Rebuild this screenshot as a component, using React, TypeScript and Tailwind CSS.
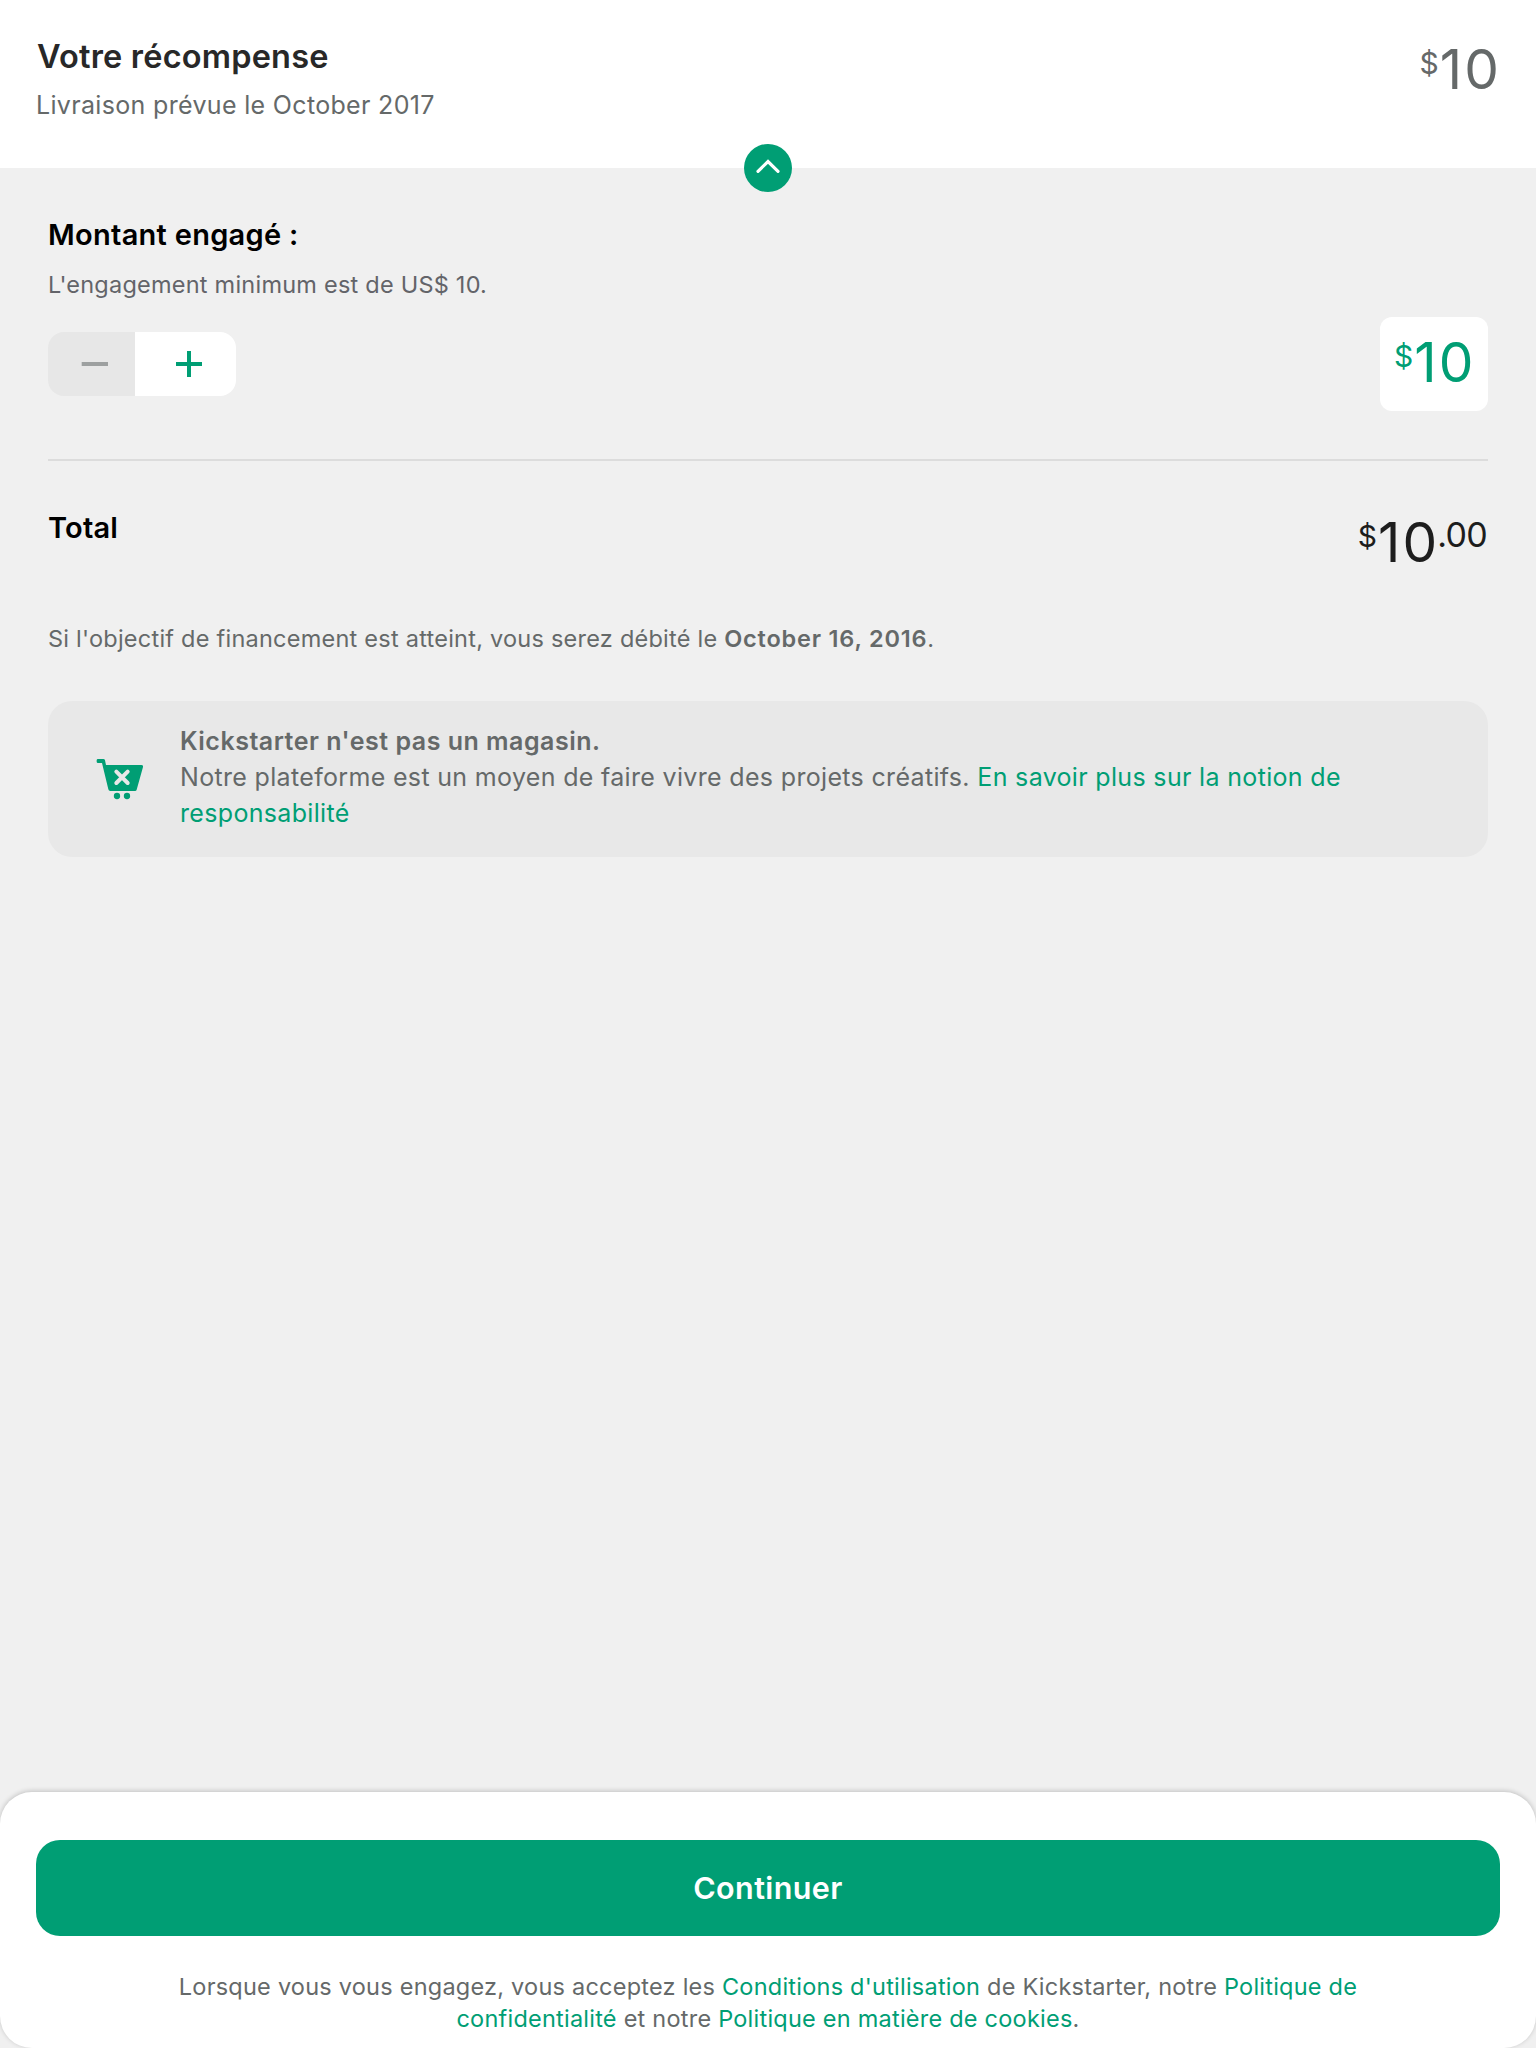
import type { ReactNode } from "react";

function Price({ className, cents }: { className: string; cents?: string }) {
  return (
    <div className={`flex items-start ${className}`}>
      <span className="mt-1.5 mr-px text-[30px] leading-none">$</span>
      <span className="-mr-[2.2px] text-[55px] leading-none tracking-[2.2px]">10</span>
      {cents && <span className="mt-[3px] text-[34px] leading-none tracking-[-0.7px]">{cents}</span>}
    </div>
  );
}

function Link({ children }: { children: ReactNode }) {
  return <a className="text-[#009e74]">{children}</a>;
}

function CartIcon() {
  return (
    <svg className="h-[42px] w-12 shrink-0" viewBox="48 54 144 126" fill="none">
      <path
        d="M54 57H70Q74 57 75 61L78 75H184Q190 75 189 81L170 149Q169 153 165 153H91Q86 153 85 148L66 69H54Q50 69 50 65V61Q50 57 54 57Z"
        fill="#009e74"
      />
      <path d="M109 95L143 129M143 95L109 129" stroke="#e8e8e8" strokeWidth="12" strokeLinecap="round" />
      <circle cx="111" cy="168" r="9.5" fill="#009e74" />
      <circle cx="141" cy="168" r="9.5" fill="#009e74" />
    </svg>
  );
}

export default function App() {
  return (
    <div className="flex h-[2048px] w-[1536px] flex-col overflow-hidden bg-[#f0f0f0] font-['Inter',sans-serif] text-[#656969]">
      <header className="relative flex h-[168px] shrink-0 justify-between bg-white pr-[37px] pl-9">
        <div className="pt-[37px]">
          <h1 className="pl-px text-[32.5px] leading-10 font-semibold tracking-[0.2px] text-[#282828]">Votre récompense</h1>
          <p className="mt-3 text-[25px] leading-8 tracking-[0.33px]">Livraison prévue le October 2017</p>
        </div>
        <Price className="mt-[42px]" />
        <button className="absolute top-36 left-[744px] size-12 rounded-full bg-[#009e74]" aria-label="Réduire">
          <svg className="size-12" viewBox="0 0 48 48" fill="none">
            <path d="M14 27.3L24 17.5L34 27.3" stroke="#fff" strokeWidth="3.2" strokeLinecap="round" />
          </svg>
        </button>
      </header>

      <main className="flex-1 px-12 pt-[49px]">
        <h2 className="text-[29px] leading-9 font-semibold tracking-[0.28px] text-black">Montant engagé :</h2>
        <p className="mt-4 text-[23.5px] leading-8 tracking-[0.23px] text-[#636469]">L'engagement minimum est de US$ 10.</p>

        <div className="mt-4 flex h-[94px] items-center justify-between">
          <div className="flex h-16 w-[188px] overflow-hidden rounded-2xl">
            <button className="w-[87px] bg-[#e7e7e7]" aria-label="Diminuer">
              <svg className="h-16 w-[87px]" viewBox="0 0 87 64" fill="none">
                <path d="M33.7 32H60" stroke="#9da0a0" strokeWidth="4" />
              </svg>
            </button>
            <button className="w-[101px] bg-white" aria-label="Augmenter">
              <svg className="h-16 w-[101px]" viewBox="0 0 101 64" fill="none">
                <path d="M41 32H67M54 19V45" stroke="#009e74" strokeWidth="4" />
              </svg>
            </button>
          </div>
          <div className="flex h-[94px] w-[108px] justify-end rounded-xl bg-white pr-[14.5px]">
            <Price className="mt-[18px] text-[#009e74]" />
          </div>
        </div>

        <div className="mt-12 h-0.5 bg-[#dcdcdc]" />

        <div className="mt-[49px] flex h-[61px] justify-between">
          <h2 className="text-[29px] leading-9 font-semibold tracking-[0.2px] text-black">Total</h2>
          <Price className="mt-[5px] mr-px text-[#1d1d1d]" cents=".00" />
        </div>

        <p className="mt-[52px] text-[23.5px] leading-8 tracking-[0.24px]">
          Si l'objectif de financement est atteint, vous serez débité le{" "}
          <strong className="font-semibold tracking-[0.8px]">October 16, 2016</strong>.
        </p>

        <section className="mt-[46px] flex h-[156px] items-center rounded-3xl bg-[#e8e8e8] pl-12">
          <CartIcon />
          <div className="-mt-1 ml-9 w-[1200px] text-[25px] leading-9 tracking-[0.33px]">
            <p className="font-semibold tracking-[0.5px]">Kickstarter n'est pas un magasin.</p>
            <p>
              Notre plateforme est un moyen de faire vivre des projets créatifs.{" "}
              <Link>En savoir plus sur la notion de<br />responsabilité</Link>
            </p>
          </div>
        </section>
      </main>

      <footer className="h-64 shrink-0 rounded-[32px] bg-white px-9 pt-12 shadow-[0_-1px_5px_rgba(0,0,0,0.2)]">
        <button className="flex h-24 w-full items-center justify-center rounded-3xl bg-[#009e74] text-[30.5px] font-semibold tracking-[0.397px] text-white">
          Continuer
        </button>
        <p className="mt-[35px] text-center text-[23.5px] leading-8 tracking-[0.232px]">
          Lorsque vous vous engagez, vous acceptez les <Link>Conditions d'utilisation</Link> de Kickstarter, notre{" "}
          <Link>Politique de<br />confidentialité</Link> et notre <Link>Politique en matière de cookies</Link>.
        </p>
      </footer>
    </div>
  );
}
